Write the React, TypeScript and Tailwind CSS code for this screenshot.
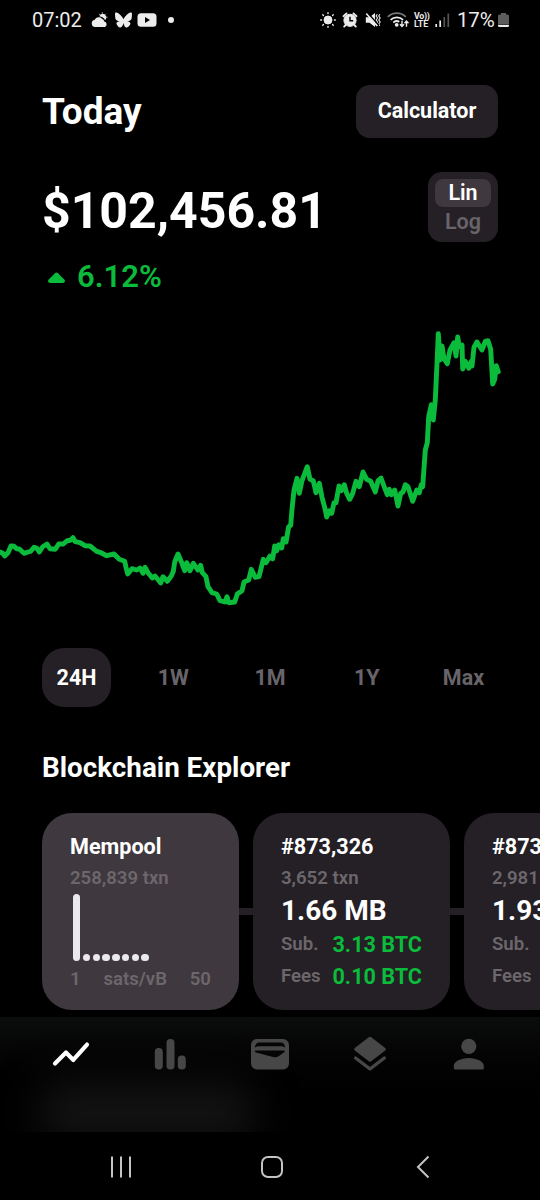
import type { ReactNode } from "react";
import { FaBluesky } from "react-icons/fa6";

const ranges = ["24H", "1W", "1M", "1Y", "Max"];

const blocks = [
	{ id: "#873,326", txn: "3,652 txn", size: "1.66 MB", subsidy: "3.13 BTC", fees: "0.10 BTC" },
	{ id: "#873,325", txn: "2,981 txn", size: "1.93 MB", subsidy: "3.13 BTC", fees: "0.08 BTC" },
];

// x,y pairs of the 24h price line
const pricePoints =
	"-3,551 0,552 2.7,553.3 4.7,556 8,552.7 11,546 14,546.3 16.7,548.7 19.3,549 24,553.3 28,552 30.7,551.3 34,547.3 36.7,548 39.3,552 42.7,546.7 47,544 50,548.7 55.3,549.3 58.7,544 63.3,544 66.7,541 70.7,540 73,537.7 75.3,541.7 80,542.7 85,545.7 90,546 96.7,551.3 100,552.3 106.7,555.7 114,554 119.3,559.3 124.7,561.3 126,567.3 127.7,574 132,568.7 136.7,570 140,568 143,573.3 145,567.3 148,572.7 152.3,578 155,576 160.7,583 163,576.7 167.3,581.3 171.3,576 173.3,571.3 174.7,562 178,554 181.3,561.7 184.7,570.7 186.7,562.7 190,570.7 193.3,563.3 198,570 200.7,565.3 202.3,572.7 206,576.7 208,586.7 212,592.7 216.7,594 220,600.7 225,602 227,596.7 228.7,602.7 234.7,602 237.3,594 242,590.7 244,582 248.7,580 251.3,569.3 255.3,577.3 259,576.7 263.3,559.3 266,562.7 270,556 272.7,558.7 274.7,546 276.7,550.7 278.7,544.7 281.7,548 283.3,538.7 286,542 288.7,526.7 290.7,525.3 292,509.3 294,490 297,478.3 299.3,493.3 302,480.7 307.3,466.7 310,479.3 313.3,480.7 316,492.7 319.3,483.3 322,497.3 324.7,507.3 326.7,517 329.3,510.7 331.7,513.3 334,502.7 336,502.7 339,486 341.3,490.7 344.3,484.7 346.7,493.3 349.7,499.3 352.7,493.3 356,481.3 359.3,486.7 363,472 366.7,479.3 370.7,481.3 375.3,492 378,480.7 381,478 384.7,488 387.3,494.7 389.3,489.3 391.3,494.7 394.7,490 398,506 400.7,493.3 403,492 405.3,484.7 408,486.7 412.7,501.3 416.7,490 419.3,492.7 421.3,484.7 422.7,486.7 425.3,450 427.3,442.7 428.7,416.7 431.3,404.7 433.3,420 435.3,400 437.3,356.7 438.3,333.7 440,360 442,346 444,358.7 447.3,363.7 450,350 454,342.7 456,356 457.7,337 459.3,346.7 462,345 462.7,369 465.3,361.3 468.7,368.3 471.3,361.3 472,366 474,347.3 477,342 482,350 485.3,341.3 488,340.7 490.7,349.3 492.7,384 494.7,379.3 496.3,365.7 498.3,371.7";

const StatusBar = () => (
	<div className="flex h-10 items-center pl-8 pr-[31px] text-[20px] text-[#ececec]">
		<span className="w-[59px]">07:02</span>
		<svg className="h-4 w-[17px]" viewBox="0 0 17 16" fill="currentColor">
			<path d="M4 15a3.7 3.7 0 0 1-.3-7.300A4.500 4.500 0 0 1 11 6.700a4 4 0 0 1 2.300 2.700A3 3 0 0 1 14 15z" />
			<path d="M8.300 4.200a3.600 3.600 0 1 1 5.700 4 5 5 0 0 0-2.200-2.600 5.500 5.500 0 0 0-3.500-1.400z" />
			<path d="M8 1.800l1 1M11.300.3v1.200M14.700 1.800l-1 1M16.500 5.200h-1.300" stroke="currentColor" strokeWidth=".9" />
		</svg>
		<FaBluesky className="ml-[7px] h-4 w-[17px]" />
		<svg className="ml-[5px] h-4 w-[20px]" viewBox="0 0 20 16">
			<rect x=".5" y="1.200" width="19" height="13.600" rx="3.500" fill="currentColor" />
			<path d="M8 5v6l5-3z" fill="#000" />
		</svg>
		<span className="ml-[11px] size-1.5 rounded-full bg-[#ececec]" />
		<div className="ml-auto flex items-center">
			<svg className="size-4" viewBox="0 0 16 16" fill="currentColor" stroke="currentColor">
				<circle cx="8" cy="8" r="4" />
				<path
					d="M8 .7v.8M8 14.500v.8M.7 8h.8M14.500 8h.8M2.800 2.800l.6.6M12.600 12.600l.6.6M2.800 13.200l.6-.6M12.600 3.400l.6-.6"
					strokeWidth="1.400"
					strokeLinecap="round"
				/>
			</svg>
			<svg className="ml-1.5 size-4" viewBox="0 0 16 16" fill="none" stroke="currentColor">
				<circle cx="8" cy="8.300" r="6.100" fill="currentColor" />
				<path d="M1.500 4.200l3-2.700M14.500 4.200l-3-2.700M3.600 13l-1.400 1.600M12.400 13l1.400 1.600" strokeWidth="1.900" strokeLinecap="round" />
				<path d="M8 4.800v4h3.200" stroke="#000" strokeWidth="1.400" />
			</svg>
			<svg className="ml-[7px] size-4" viewBox="0 0 16 16">
				<path d="M.8 5.300h3.700L10 1v14l-5.500-4.300H.8z" fill="currentColor" />
				<path d="M12.300 2.200l-1.200 1.800 1.500 2-1.500 2 1.500 2-1.500 2 1.200 1.800M14.900 2.200l-1.200 1.800 1.500 2-1.500 2 1.500 2-1.500 2 1.200 1.800" stroke="currentColor" strokeWidth="1.100" fill="none" />
				<path d="M2.600.8l11 12.500" stroke="#000" strokeWidth="1.600" />
				<path d="M1.200 1.500l11 12.500" stroke="currentColor" strokeWidth="1.600" />
			</svg>
			<svg className="ml-1.5 h-4 w-[22px]" viewBox="0 0 22 16" fill="none" stroke="currentColor" strokeWidth="1.800">
				<path d="M.8 4.800a13 13 0 0 1 18 0" stroke="#777" />
				<path d="M3.600 7.800a9 9 0 0 1 12.500 0M6.300 10.600a5 5 0 0 1 6-.8" />
				<circle cx="9.700" cy="12.800" r="1" fill="currentColor" />
				<path d="M15 8.800v5.500M13 12.300l2 2.200 2-2.200M19.500 14.800V9.300M17.500 11.300l2-2.200 2 2.200" strokeWidth="1.400" />
			</svg>
			<div className="ml-[5px] flex w-4 flex-col text-[8.8px] font-bold leading-[8px]">
				<span className="tracking-[-0.3px]">Vo))</span>
				<span>LTE</span>
			</div>
			<svg className="ml-[5px] h-4 w-[15px]" viewBox="0 0 15 16">
				<path d="M1.200 12v3M5.200 8.500V15" stroke="currentColor" strokeWidth="1.700" />
				<path d="M9.300 5v10M13.300 1.500V15" stroke="#555" strokeWidth="1.700" />
			</svg>
			<span className="ml-[7px] w-[39px] text-[20.5px] tracking-[-0.2px]">17%</span>
			<svg className="ml-[2px] h-4 w-[11px]" viewBox="0 0 11 16">
				<path d="M3 1h5v1.500h1.500a1.500 1.500 0 0 1 1.500 1.500v8H0V4a1.500 1.500 0 0 1 1.500-1.500H3z" fill="#5c5c5c" />
				<path d="M0 12.700h11v.8a1.500 1.500 0 0 1-1.500 1.500h-8A1.500 1.500 0 0 1 0 13.500z" fill="currentColor" />
			</svg>
		</div>
	</div>
);

const Card = ({ className, children }: { className: string; children: ReactNode }) => (
	<div className={`h-[197px] w-[197px] shrink-0 rounded-[30px] px-7 pt-[21px] ${className}`}>
		{children}
	</div>
);

const Connector = () => <div className="h-[7px] w-3.5 shrink-0 bg-[#242025]" />;

const MempoolCard = () => (
	<Card className="bg-[#3f383e]">
		<div className="text-[21.6px] font-bold leading-[26px]">Mempool</div>
		<div className="mt-[5px] text-[18.6px] font-semibold leading-[26px] text-[#6c676c]">258,839 txn</div>
		<div className="mt-[3px] flex h-[67px] items-end gap-[2.4px] pl-[3px]">
			<div className="h-full w-[7.4px] rounded-full bg-[#ece9ec]" />
			{Array.from({ length: 7 }, (_, i) => (
				<div key={i} className="size-[7.4px] rounded-full bg-[#ece9ec]" />
			))}
		</div>
		<div className="mt-[5px] flex justify-between text-[18.6px] font-semibold leading-[26px] text-[#6c676c]">
			<span>1</span>
			<span>sats/vB</span>
			<span>50</span>
		</div>
	</Card>
);

const BlockCard = ({ block }: { block: (typeof blocks)[number] }) => (
	<Card className="bg-[#242025]">
		<div className="text-[21.6px] font-bold leading-[26px]">{block.id}</div>
		<div className="mt-[5px] text-[18.6px] font-semibold leading-[26px] text-[#6c676c]">{block.txn}</div>
		<div className="mt-1 text-[28px] font-bold leading-[32px]">{block.size}</div>
		<div className="mt-0.5 flex h-8 items-center justify-between whitespace-nowrap">
			<span className="text-[18.6px] font-semibold text-[#6c676c]">Sub.</span>
			<span className="text-[21.6px] font-bold text-[#0bbb3b]">{block.subsidy}</span>
		</div>
		<div className="flex h-8 items-center justify-between whitespace-nowrap">
			<span className="text-[18.6px] font-semibold text-[#6c676c]">Fees</span>
			<span className="text-[21.6px] font-bold text-[#0bbb3b]">{block.fees}</span>
		</div>
	</Card>
);

const TabBar = () => (
	<div className="relative mt-[7px] h-[115px] overflow-hidden bg-gradient-to-b from-[#0b0d0c] via-[#030303] via-40% to-black">
		<div className="absolute left-[40px] top-[66px] h-[60px] w-[214px] rounded-[20px] bg-[#131313] blur-[20px]" />
		<div className="relative flex h-[73px] items-center px-[21px] text-[#474747]">
			<div className="flex flex-1 justify-center">
				<svg className="h-10 w-10" viewBox="51 1033.400 40 40" fill="none" stroke="#fff" strokeWidth="4.200" strokeLinecap="round" strokeLinejoin="round">
					<path d="M55 1063 L66 1052 L73.300 1059.300 L87 1044" />
				</svg>
			</div>
			<div className="flex flex-1 justify-center">
				<svg className="h-10 w-10" viewBox="150.200 1033.400 40 40" fill="currentColor">
					<rect x="155" y="1047.500" width="8" height="21.500" rx="3.800" />
					<rect x="166.700" y="1038.300" width="8" height="30.700" rx="3.800" />
					<rect x="178" y="1055" width="8" height="14" rx="3.800" />
				</svg>
			</div>
			<div className="flex flex-1 justify-center">
				<svg className="h-10 w-10" viewBox="250 1033.400 40 40">
					<rect x="251" y="1038.300" width="38" height="30.700" rx="6" fill="currentColor" />
					<path d="M255 1047c0-3 1.500-5 4-5h22c2.500 0 4 2 4 5-1.500-1-2.500-1.300-4-1.300h-22c-1.500 0-2.500.3-4 1.300z" fill="#050505" />
					<path d="M255.500 1050h28.500c.8 0 1 .8.400 1.300l-5.400 4.200c-1.800 1.300-3.500 1.500-6 .8l-17-4.500c-1.500-.4-1.500-1.800-.5-1.800z" fill="#050505" />
				</svg>
			</div>
			<div className="flex flex-1 justify-center">
				<svg className="h-10 w-10" viewBox="349.700 1033 40 40">
					<path d="M369.700 1037.200L384 1048.300L369.700 1059.200L355.400 1048.300z" fill="currentColor" stroke="currentColor" strokeWidth="3" strokeLinejoin="round" />
					<path d="M355.300 1057L369.700 1068L384 1057" fill="none" stroke="currentColor" strokeWidth="3.400" strokeLinecap="round" strokeLinejoin="round" />
				</svg>
			</div>
			<div className="flex flex-1 justify-center">
				<svg className="h-10 w-10" viewBox="449.200 1033.400 40 40" fill="currentColor">
					<circle cx="469" cy="1045.700" r="7.600" />
					<path d="M454 1065c0-4 7-7.700 15-7.700s15 3.700 15 7.700v2.600a1.400 1.400 0 0 1-1.400 1.400h-27.200a1.400 1.400 0 0 1-1.400-1.400z" />
				</svg>
			</div>
		</div>
	</div>
);

const SystemNav = () => (
	<div className="flex h-[68px] items-center pl-[45px] pr-[41px] pt-px text-[#c4c4c4]">
		<div className="flex flex-1 justify-center">
			<svg className="size-6" viewBox="0 0 24 24" stroke="currentColor" strokeWidth="2">
				<path d="M3 1.500v21M12 1.500v21M21 1.500v21" />
			</svg>
		</div>
		<div className="flex flex-1 justify-center">
			<svg className="size-6" viewBox="0 0 24 24" fill="none" stroke="currentColor" strokeWidth="2">
				<rect x="2" y="2" width="20" height="20" rx="6" />
			</svg>
		</div>
		<div className="flex flex-1 justify-center">
			<svg className="size-6" viewBox="0 0 24 24" fill="none" stroke="currentColor" strokeWidth="2">
				<path d="M17.500 1.500L7 12l10.500 10.500" />
			</svg>
		</div>
	</div>
);

export default function App() {
	return (
		<main className="h-[1200px] w-[540px] overflow-hidden bg-black font-['Roboto',sans-serif] text-white">
			<StatusBar />

			<header className="mt-11 flex h-[54px] items-center justify-between px-[42px]">
				<h1 className="pt-0.5 text-[37px] font-bold">Today</h1>
				<button className="h-[53px] w-[142px] rounded-[14px] bg-[#242025] pt-px text-[21.5px] font-bold">
					Calculator
				</button>
			</header>

			{/* Price + scale toggle */}
			<div className="mt-[34px] flex h-[70px] justify-between px-[42px]">
				<div className="pt-2 text-[50px] font-bold leading-[63px]">$102,456.81</div>
				<div className="h-[70px] w-[70px] rounded-[14px] bg-[#242025] px-[7px] pt-[7px] text-center text-[21.5px] font-semibold">
					<div className="rounded-[8px] bg-[#3f383e] leading-[28px]">Lin</div>
					<div className="leading-[29px] text-[#69646a]">Log</div>
				</div>
			</div>
			<div className="flex h-[68px] items-center gap-3 pl-12 text-[#0bbb3b]">
				<svg className="mt-1 h-3 w-[17px]" viewBox="0 0 17 12" fill="currentColor">
					<path d="M7 1.200a2.200 2.200 0 0 1 3 0l6.300 6.300c1.300 1.400.5 3.500-1.400 3.500H2.100C.2 11-.6 8.900.7 7.500z" />
				</svg>
				<span className="pt-0.5 text-[31px] font-semibold">6.12%</span>
			</div>

			<svg className="block h-[320px] w-full" viewBox="0 310 540 320" fill="none">
				<polyline points={pricePoints} stroke="#0bbb3b" strokeWidth="4.900" strokeLinecap="round" strokeLinejoin="round" />
			</svg>

			<div className="mt-[18px] flex justify-between px-[42px]">
				{ranges.map((range, i) => (
					<button
						key={range}
						className={`h-[59px] w-[69px] rounded-[22px] pt-0.5 text-[21.5px] font-bold ${
							i === 0 ? "bg-[#242025] text-white" : "text-[#69646a]"
						}`}
					>
						{range}
					</button>
				))}
			</div>

			<h2 className="mt-[41px] px-[42px] text-[27.8px] font-bold leading-[40px]">Blockchain Explorer</h2>
			<div className="mt-[25px] flex items-center overflow-hidden pl-[42px]">
				<MempoolCard />
				{blocks.map((block) => (
					<div key={block.id} className="flex shrink-0 items-center">
						<Connector />
						<BlockCard block={block} />
					</div>
				))}
			</div>

			<TabBar />
			<SystemNav />
		</main>
	);
}
